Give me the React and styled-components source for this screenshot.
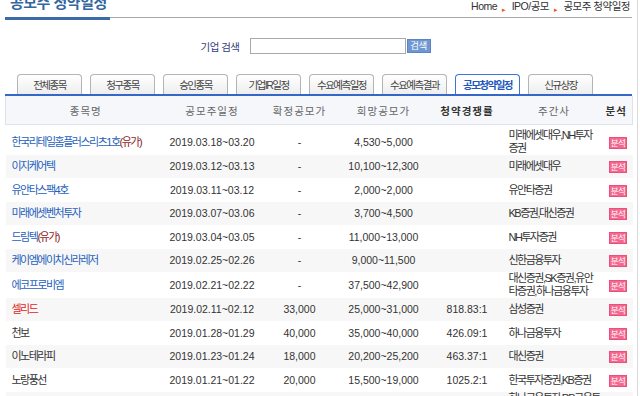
import React from 'react'
import styled, { createGlobalStyle } from 'styled-components'

const GlobalStyle = createGlobalStyle`
  body {
    margin: 0;
    background: #fff;
    font-family: "Liberation Sans", "Noto Sans CJK KR", sans-serif;
    color: #333;
  }
`

const tabs = ['전체종목', '청구종목', '승인종목', '기업IR일정', '수요예측일정', '수요예측결과', '공모청약일정', '신규상장']

const rows = [
  { name: '한국리테일홈플러스리츠1호', tag: '(유가)', tone: 'link', date: '2019.03.18~03.20', fixed: '-', hope: '4,530~5,000', comp: '', lead: '미래에셋대우,NH투자증권' },
  { name: '이지케어텍', tone: 'link', date: '2019.03.12~03.13', fixed: '-', hope: '10,100~12,300', comp: '', lead: '미래에셋대우' },
  { name: '유안타스팩4호', tone: 'link', date: '2019.03.11~03.12', fixed: '-', hope: '2,000~2,000', comp: '', lead: '유안타증권' },
  { name: '미래에셋벤처투자', tone: 'link', date: '2019.03.07~03.06', fixed: '-', hope: '3,700~4,500', comp: '', lead: 'KB증권,대신증권' },
  { name: '드림텍', tag: '(유가)', tone: 'link', date: '2019.03.04~03.05', fixed: '-', hope: '11,000~13,000', comp: '', lead: 'NH투자증권' },
  { name: '케이엠에이치신라레저', tone: 'link', date: '2019.02.25~02.26', fixed: '-', hope: '9,000~11,500', comp: '', lead: '신한금융투자' },
  { name: '에코프로비엠', tone: 'link', date: '2019.02.21~02.22', fixed: '-', hope: '37,500~42,900', comp: '', lead: '대신증권,SK증권,유안타증권,하나금융투자' },
  { name: '셀리드', tone: 'hot', date: '2019.02.11~02.12', fixed: '33,000', hope: '25,000~31,000', comp: '818.83:1', lead: '삼성증권' },
  { name: '천보', tone: 'plain', date: '2019.01.28~01.29', fixed: '40,000', hope: '35,000~40,000', comp: '426.09:1', lead: '하나금융투자' },
  { name: '이노테라피', tone: 'plain', date: '2019.01.23~01.24', fixed: '18,000', hope: '20,200~25,200', comp: '463.37:1', lead: '대신증권' },
  { name: '노랑풍선', tone: 'plain', date: '2019.01.21~01.22', fixed: '20,000', hope: '15,500~19,000', comp: '1025.2:1', lead: '한국투자증권,KB증권' },
  { name: '에이에프더블류', tone: 'plain', date: '2019.01.17~01.18', fixed: '4,200', hope: '4,200~4,700', comp: '612.5:1', lead: '하나금융투자,DB금융투자' },
]

const toneColor = { link: '#1f5fbd', hot: '#e0241c', plain: '#333' }

export default function App() {
  return (
    <Page>
      <GlobalStyle />
      <TitleBar>
        <Title>공모주 청약일정</Title>
        <Crumbs>
          Home<Sep>▸</Sep>IPO/공모<Sep>▸</Sep>공모주 청약일정
        </Crumbs>
      </TitleBar>

      <SearchRow>
        <SearchLabel>기업 검색</SearchLabel>
        <SearchInput type="text" />
        <SearchButton>검색</SearchButton>
      </SearchRow>

      <TabBar>
        {tabs.map((t) => (
          <Tab key={t} $active={t === '공모청약일정'}>{t}</Tab>
        ))}
      </TabBar>

      <Table>
        <colgroup>
          <col style={{ width: 160 }} />
          <col style={{ width: 93 }} />
          <col style={{ width: 82 }} />
          <col style={{ width: 86 }} />
          <col style={{ width: 81 }} />
          <col style={{ width: 93 }} />
          <col style={{ width: 32 }} />
        </colgroup>
        <thead>
          <tr>
            <Head>종목명</Head>
            <Head>공모주일정</Head>
            <Head>확정공모가</Head>
            <Head>희망공모가</Head>
            <Head $strong>청약경쟁률</Head>
            <Head>주간사</Head>
            <Head $strong>분석</Head>
          </tr>
        </thead>
        <tbody>
          <Gap><td colSpan={7} /></Gap>
          {rows.map((r, i) => (
            <Row key={r.name} $alt={i % 2 === 1}>
              <NameCell $tone={r.tone}>
                {r.name}
                {r.tag && <Tag>{r.tag}</Tag>}
              </NameCell>
              <Cell>{r.date}</Cell>
              <Cell>{r.fixed}</Cell>
              <Cell>{r.hope}</Cell>
              <Cell>{r.comp}</Cell>
              <LeadCell>{r.lead}</LeadCell>
              <Cell><Badge>분석</Badge></Cell>
            </Row>
          ))}
        </tbody>
      </Table>
    </Page>
  )
}

const Page = styled.div`
  width: 638px;
  min-height: 396px;
  box-sizing: border-box;
  padding: 0 5px;
  border-right: 1px solid #d9d9d9;
  overflow: hidden;
`

const TitleBar = styled.div`
  display: flex;
  justify-content: space-between;
  align-items: flex-end;
  margin-top: -6px;
  border-bottom: 1px solid #a8a8a8;
`

const Title = styled.h2`
  margin: 0 0 -3px 0;
  width: 105px;
  box-sizing: border-box;
  padding: 0 0 5px 5px;
  border-bottom: 3px solid #3a6ca6;
  font-size: 15px;
  line-height: 18px;
  font-weight: bold;
  color: #34669f;
  letter-spacing: -0.5px;
  white-space: nowrap;
`

const Crumbs = styled.div`
  padding: 0 2px 1px 0;
  font-size: 10.5px;
  line-height: 13px;
  letter-spacing: -0.5px;
  color: #333;
`

const Sep = styled.span`
  display: inline-block;
  margin: 0 6px 0 5px;
  font-size: 7px;
  color: #f0561e;
  vertical-align: -2px;
`

const SearchRow = styled.div`
  display: flex;
  align-items: center;
  justify-content: center;
  height: 16px;
  margin-top: 20px;
  padding-right: 6px;
`

const SearchLabel = styled.span`
  font-size: 10.5px;
  letter-spacing: -0.5px;
  color: #35407c;
  margin-right: 10px;
`

const SearchInput = styled.input`
  width: 156px;
  height: 16px;
  box-sizing: border-box;
  border: 1px solid #a9a9a9;
  padding: 0 3px;
  margin: 0;
  outline: none;
`

const SearchButton = styled.button`
  width: 24px;
  height: 14px;
  margin-left: 1px;
  padding: 0;
  border: 1px solid #5c84c2;
  background: #6e97d3;
  color: #fff;
  font-family: inherit;
  font-size: 9.5px;
  line-height: 12px;
  letter-spacing: -0.5px;
`

const TabBar = styled.div`
  display: flex;
  gap: 8px;
  margin-top: 20px;
  padding-left: 12px;
  border-bottom: 2px solid #3467c8;
`

const Tab = styled.div`
  width: 65px;
  height: 20px;
  box-sizing: border-box;
  padding-top: 2px;
  border: 1px solid ${(p) => (p.$active ? '#3f74d4' : '#b4b4b4')};
  border-bottom: none;
  border-radius: 4px 4px 0 0;
  background: ${(p) => (p.$active ? '#fff' : 'linear-gradient(#ffffff, #eeeeee)')};
  color: ${(p) => (p.$active ? '#2157bd' : '#444')};
  font-weight: ${(p) => (p.$active ? 'bold' : 'normal')};
  font-size: 10.5px;
  line-height: 16px;
  letter-spacing: -1.5px;
  text-align: center;
  white-space: nowrap;
`

const Table = styled.table`
  width: 627px;
  table-layout: fixed;
  border-collapse: collapse;
  font-size: 10.5px;
`

const Head = styled.th`
  height: 28px;
  padding: 0;
  background: #f5f7fb;
  border-bottom: 1px solid #dde2ec;
  font-size: 10.5px;
  letter-spacing: 1px;
  font-weight: ${(p) => (p.$strong ? 'bold' : 'normal')};
  color: ${(p) => (p.$strong ? '#333' : '#666')};
  text-align: center;
  &:first-child { border-left: 1px solid #dde2ec; }
  &:last-child { border-right: 1px solid #dde2ec; }
`

const Gap = styled.tr`
  td { height: 4px; padding: 0; }
`

/* rows alternate 24 / 23 px so the stripes land where the reference has them */
const Row = styled.tr`
  height: ${(p) => (p.$alt ? 23 : 24)}px;
  background: ${(p) => (p.$alt ? '#f7f7f7' : '#fff')};
`

const Cell = styled.td`
  padding: 0;
  line-height: 13px;
  text-align: center;
  color: #333;
  white-space: nowrap;
`

const NameCell = styled(Cell)`
  padding-left: 6px;
  text-align: left;
  font-size: 11px;
  letter-spacing: -1.5px;
  color: ${(p) => toneColor[p.$tone]};
`

const Tag = styled.span`
  color: #8c1d1d;
`

const LeadCell = styled(Cell)`
  padding-left: 1px;
  text-align: left;
  font-size: 11px;
  letter-spacing: -1.5px;
  white-space: normal;
`

const Badge = styled.span`
  display: inline-block;
  height: 10px;
  margin-left: 3px;
  padding: 0 1px;
  border: 1px solid #ea4f7d;
  background: #f4688f;
  color: #fff;
  font-size: 8.5px;
  line-height: 10px;
  letter-spacing: -0.5px;
  vertical-align: middle;
`
